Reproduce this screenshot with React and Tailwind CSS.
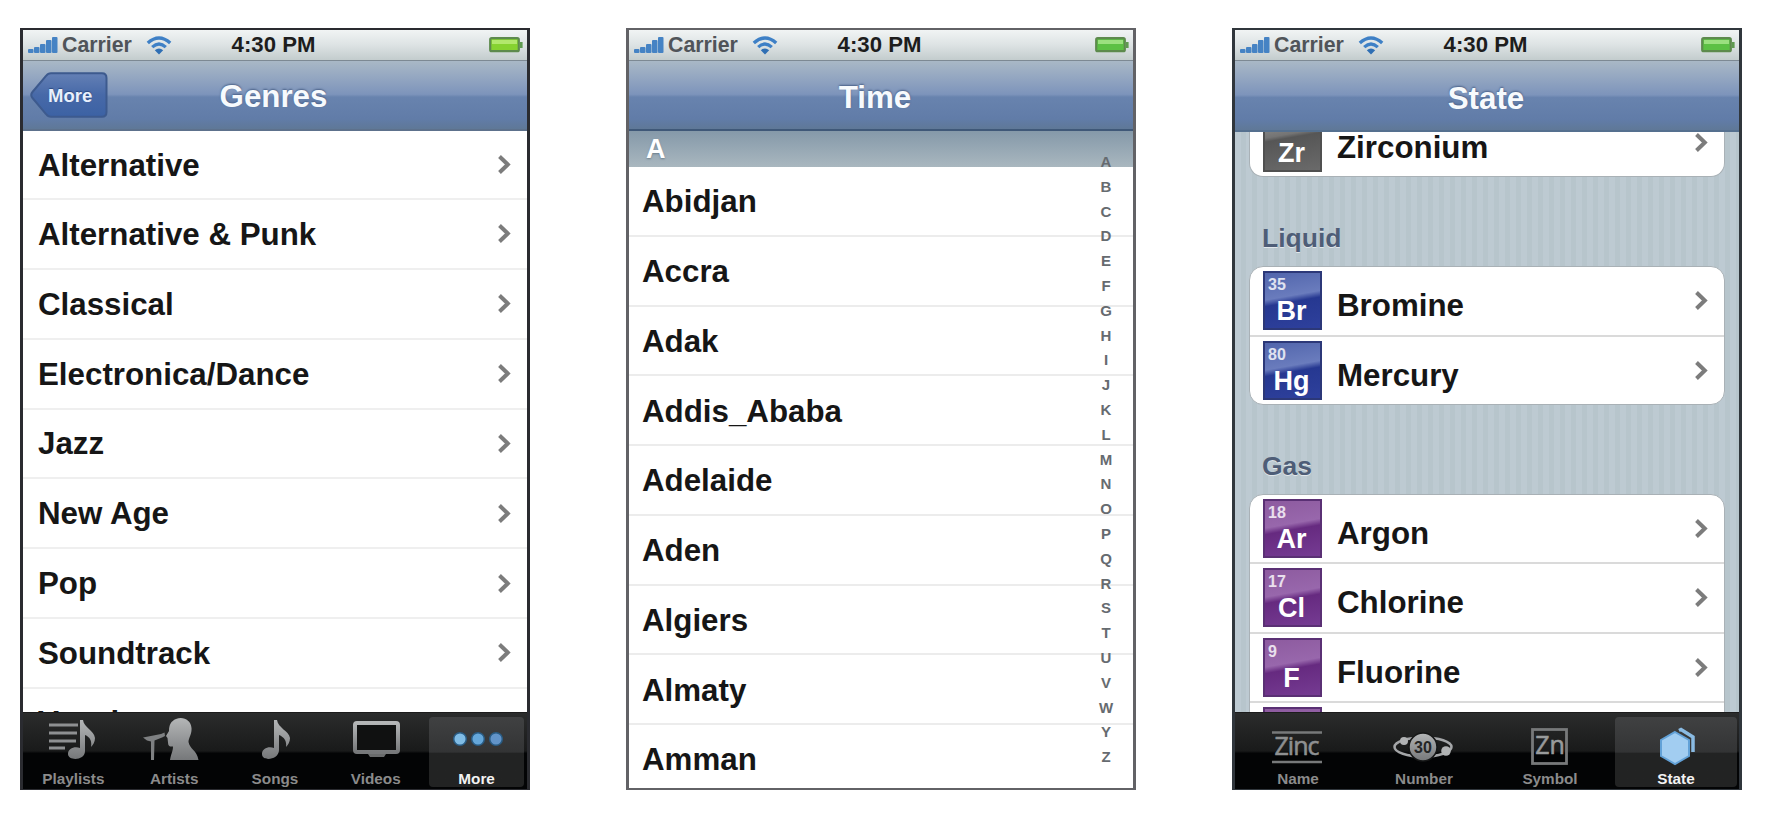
import React from "react";

const genres = ["Alternative", "Alternative & Punk", "Classical", "Electronica/Dance", "Jazz", "New Age", "Pop", "Soundtrack"];
const cities = ["Abidjan", "Accra", "Adak", "Addis_Ababa", "Adelaide", "Aden", "Algiers", "Almaty", "Amman"];
const letters = "ABCDEFGHIJKLMNOPQRSTUVWYZ".split("");

function Chevron() {
  return (
    <svg className="h-[21px] w-[15px] shrink-0" viewBox="0 0 15 21" fill="none">
      <path d="M1.500 2.500 L9.800 10.500 L1.500 18.500" stroke="#7c7c7c" strokeWidth="4" />
    </svg>
  );
}

function StatusBar({ lime }) {
  return (
    <div className="grid h-[31px] shrink-0 grid-cols-3 items-center border-b border-[#7d8993] bg-linear-to-b from-[#f1f4f4] via-[#dde3e4] to-[#c3cccd] pr-[4px] pl-[5px] text-[#1d1d1d]">
      <div className="flex items-center">
        <svg className="h-[18px] w-[31px]" viewBox="0 0 31 18">
          <g fill="#4583c4">
            <rect x="0" y="13" width="5.500" height="4" rx="1" />
            <rect x="6" y="11" width="5.500" height="6" rx="1" />
            <rect x="12" y="8" width="5.500" height="9" rx="1" />
            <rect x="18" y="4" width="5.500" height="13" rx="1" />
            <rect x="24" y="1" width="5.500" height="16" rx="1" />
          </g>
        </svg>
        <span className="ml-[3px] text-[21.3px] leading-[28px] text-[#505459]">Carrier</span>
        <svg className="ml-[14px] h-[19px] w-[26px] shrink-0" viewBox="0 0 26 19" fill="none">
          <path d="M1.8 7 Q13 -3 24.2 7" stroke="#3e80c6" strokeWidth="3.4" />
          <path d="M6.2 11.2 Q13 4.8 19.8 11.2" stroke="#3e80c6" strokeWidth="3.2" />
          <path d="M13 18.5 L8.8 14.2 Q13 10.6 17.2 14.2 Z" fill="#2f6fb4" />
        </svg>
      </div>
      <div className="pr-[4px] text-center text-[22.2px] leading-[28px]">4:30 PM</div>
      <svg className="h-[17px] w-[34px] justify-self-end" viewBox="0 0 34 17">
        <rect x="1.2" y="1.2" width="28.6" height="13" rx="1.5" fill={lime ? "#86d230" : "#5cc044"} stroke="#5d8a4d" strokeWidth="2.2" />
        <rect x="3" y="3" width="25" height="4" fill={lime ? "#b2e86c" : "#9be07f"} />
        <rect x="31" y="5" width="2.6" height="6" fill="#5f9a50" />
      </svg>
    </div>
  );
}

function NavBar({ title, back, tone }) {
  return (
    <div className={"relative flex shrink-0 items-center justify-center border-b-2 bg-[linear-gradient(180deg,#a9b8c6_0%,#93a6c1_25%,#7d94bb_49%,#6883ae_53%,#617ca8_85%,#5f7897_100%)] " + tone}>
      {back && (
        <div className="absolute top-[11px] left-[7px] h-[46px] w-[78px]">
          <svg className="absolute inset-0 h-[46px] w-[78px]" viewBox="0 0 78 46">
            <defs>
              <linearGradient id="back" x1="0" y1="0" x2="0" y2="1">
                <stop offset="0" stopColor="#6480b5" />
                <stop offset="0.5" stopColor="#4769a8" />
                <stop offset="1" stopColor="#3c62a4" />
              </linearGradient>
            </defs>
            <path d="M21 1.2 H72 Q76.500 1.200 76.500 6 V40 Q76.500 44.800 72 44.800 H21 Q18 44.800 16 42 L2.500 26 Q0 23 2.500 20 L16 4 Q18 1.200 21 1.200 Z" fill="url(#back)" stroke="#3d5a8e" strokeWidth="2" />
          </svg>
          <span className="relative block pt-[1px] pl-[18px] text-[18.500px] leading-[46px] text-[#e9f0fc] [text-shadow:0_-1px_1px_#2c4a80]">{back}</span>
        </div>
      )}
      <span className="text-[31.3px] leading-[40px] text-[#f7fafd] [text-shadow:0_-1px_2px_#4a6188]">{title}</span>
    </div>
  );
}

function Phone({ children, frame }) {
  return (
    <section className={"flex h-[762px] w-[510px] shrink-0 flex-col overflow-hidden border-x-[3px] border-t-2 bg-white " + frame}>
      {children}
    </section>
  );
}

function Tab({ label, active, children, wide }) {
  return (
    <div
      className={
        "mt-[4px] mb-[2px] flex flex-1 flex-col items-center rounded-[4px] " +
        (active ? "bg-linear-to-b from-[#404142] from-0% via-[#333435] via-50% to-[#222323] to-52% text-[#f2f2f2] " : "text-[#8b8b8b] ") +
        (wide ? "mx-[2px]" : "mx-[3px]")
      }
    >
      <svg className="h-[50px] w-[70px] shrink-0" viewBox="0 0 70 50">{children}</svg>
      <span className="text-[15.3px] leading-[23px]">{label}</span>
    </div>
  );
}

function TabBar({ children }) {
  return (
    <div className="relative z-10 flex h-[77px] shrink-0 border-t border-[#1c1c1c] bg-[linear-gradient(180deg,#2b2c2c_0%,#191a1a_50%,#030405_53%,#030405_100%)]">
      {children}
    </div>
  );
}

function Metal({ id }) {
  return (
    <linearGradient id={id} x1="0" y1="0" x2="0" y2="1">
      <stop offset="0" stopColor="#b4b6b7" />
      <stop offset="1" stopColor="#76787a" />
    </linearGradient>
  );
}

function Genres() {
  return (
    <Phone frame="border-b border-[#2a2b30]">
      <StatusBar lime />
      <NavBar title="Genres" back="More" tone="h-[70px] border-[#5d718c] pt-[4px] pr-[3px]" />
      <div className="flex-1 overflow-hidden text-[31.3px] text-[#161616]">
        {genres.map((g, i) => (
          <div key={g} className={"flex items-center justify-between border-b-2 border-[#efefef] pr-[14px] pl-[15px] " + (i === 0 ? "h-[69px]" : "h-[69.850px]")}>
            <span className="pt-[2px] leading-[40px]">{g}</span>
            <Chevron />
          </div>
        ))}
        <div className="pt-[14px] pl-[15px] leading-[40px]">Vocal</div>
      </div>
      <TabBar>
        <Tab label="Playlists">
          <defs><Metal id="m1" /></defs>
          <path d="M11 8 H40 M11 16 H39 M11 24 H38 M11 31 H27" stroke="#8e9092" strokeWidth="3.2" />
          <path d="M42 3 L45 3 C46 11 56 13 57 21 C57 25 55 28 53 30 C54 24 52 20 47 18 V34 C47 44 30 44 30 37 C30 31 37 29 42 31 Z" fill="url(#m1)" />
        </Tab>
        <Tab label="Artists">
          <defs><Metal id="m2" /></defs>
          <path d="M37 2 C44 -1 52 3 52.500 11 C53 17 49.500 21 49.500 25 C50.500 32 58 33 59.500 43 H31 C32 37 34 34 34 29.500 C31 30 29 29 29 25.500 L28.500 21 L27 19 L30 14 C30 8 32 4 37 2 Z" fill="url(#m2)" />
          <path d="M4 20.500 L22 17 L25.500 15.500 L26 19 L23 20.500 L15.500 23.500 L15 43 H12 L12 24.500 L8 23.500 Z" fill="#7e8082" />
        </Tab>
        <Tab label="Songs">
          <defs><Metal id="m3" /></defs>
          <path d="M34 3 L37 3 C38 11 49 14 50 21 C50 25 48 28 46 30 C47 24 44 20 39 18 V33 C39 43 22 45 22 37 C22 31 29 29 34 31 Z" fill="url(#m3)" />
        </Tab>
        <Tab label="Videos">
          <defs><Metal id="m4" /></defs>
          <rect x="14" y="6" width="43" height="29" rx="2" fill="#101111" stroke="url(#m4)" strokeWidth="4" />
          <path d="M27 37 H45 L43 40 H29 Z" fill="#6a6c6d" />
        </Tab>
        <Tab label="More" active>
          <g stroke="#295b83" strokeWidth="1.500">
            <circle cx="18" cy="22" r="6.3" fill="#80bce5" />
            <circle cx="36" cy="22" r="6.3" fill="#65a7da" />
            <circle cx="54" cy="22" r="6.3" fill="#6294c9" />
          </g>
        </Tab>
      </TabBar>
    </Phone>
  );
}

function Times() {
  return (
    <Phone frame="border-b-2 border-[#626266]">
      <StatusBar />
      <NavBar title="Time" tone="h-[70px] border-[#3f5878] pt-[6px] pr-[12px]" />
      <div className="relative flex-1 overflow-hidden">
        <div className="h-[36px] bg-linear-to-b from-[#8599a9] to-[#a9b7bf] pl-[17px] text-[27px] leading-[36px] text-white [text-shadow:0_1px_2px_#6d7f8c]">A</div>
        <div className="text-[31.3px] text-[#161616]">
          {cities.map((c) => (
            <div key={c} className="flex h-[69.750px] items-center border-b-2 border-[#ececec] pt-[3px] pl-[13px]">
              <span className="leading-[40px]">{c}</span>
            </div>
          ))}
        </div>
        <div className="absolute top-[19px] right-[17px] flex w-[20px] flex-col text-center text-[15px] text-[#666b70]">
          {letters.map((l) => (
            <span key={l} className="block h-[24.800px] leading-[24.800px]">{l}</span>
          ))}
        </div>
      </div>
    </Phone>
  );
}

const tileTone = {
  gray: "border-[#505050] bg-[linear-gradient(170deg,#9b9b9b_0%,#747474_36%,#565656_42%,#6a6a6a_100%)]",
  blue: "border-[#2c3878] bg-[linear-gradient(170deg,#5165ac_0%,#6a7cbd_42%,#263891_52%,#2e409c_100%)]",
  purple: "border-[#5a3074] bg-[linear-gradient(170deg,#8d5b9f_0%,#9867ac_42%,#662a80_52%,#753b92_100%)]",
};

function Element({ n, sym, name, tone, last, short }) {
  return (
    <div className={"flex shrink-0 items-start pt-[4px] pr-[14px] pl-[13px] " + (short ? "h-[67px] " : "h-[69.500px] ") + (last ? "" : "border-b-2 border-[#dadada]")}>
      <div className={"flex h-[59px] w-[59px] shrink-0 flex-col border-2 text-white " + tileTone[tone]}>
        <span className="h-[21px] pl-[3px] text-[16px] leading-[23px] text-white/80">{n}</span>
        <span className="pr-[2px] text-center text-[27px] leading-[34px]">{sym}</span>
      </div>
      <span className="flex-1 pt-[15px] pl-[15px] text-[31.3px] leading-[40px] text-[#161616]">{name}</span>
      <div className="pt-[19px]"><Chevron /></div>
    </div>
  );
}

function Elements() {
  return (
    <Phone frame="border-b border-[#30363c]">
      <StatusBar />
      <NavBar title="State" tone="h-[71px] border-[#55708f] pt-[6px] pr-[2px]" />
      <div className="flex flex-1 flex-col overflow-hidden bg-[repeating-linear-gradient(90deg,#bdcad2_0px,#bdcad2_6px,#b7c5cc_6px,#b7c5cc_11px)] pr-[14px] pl-[14px]">
        <div className="flex h-[45px] shrink-0 flex-col justify-end overflow-hidden rounded-b-[14px] border-x border-b border-[#a9b1b6] bg-white">
          <Element n="40" sym="Zr" name="Zirconium" tone="gray" last short />
        </div>
        <h2 className="h-[89px] shrink-0 pt-[41px] pl-[13px] text-[26.500px] leading-[40px] text-[#4e5d77] [text-shadow:0_1px_0_#e1e7eb]">Liquid</h2>
        <div className="shrink-0 overflow-hidden rounded-[14px] border border-[#a9b1b6] bg-white">
          <Element n="35" sym="Br" name="Bromine" tone="blue" />
          <Element n="80" sym="Hg" name="Mercury" tone="blue" last short />
        </div>
        <h2 className="h-[89px] shrink-0 pt-[41px] pl-[13px] text-[26.500px] leading-[40px] text-[#4e5d77] [text-shadow:0_1px_0_#e1e7eb]">Gas</h2>
        <div className="shrink-0 overflow-hidden rounded-t-[14px] border border-[#a9b1b6] bg-white">
          <Element n="18" sym="Ar" name="Argon" tone="purple" />
          <Element n="17" sym="Cl" name="Chlorine" tone="purple" />
          <Element n="9" sym="F" name="Fluorine" tone="purple" />
          <Element n="" sym="" name="" tone="purple" />
        </div>
      </div>
      <TabBar>
        <Tab label="Name" wide>
          <path d="M9 15.500 H59 M9 45 H59" stroke="#77797a" strokeWidth="2.500" />
          <text x="34" y="38" textAnchor="middle" fontSize="25" fontWeight="400" fill="#8e9091" stroke="#8e9091" strokeWidth="0.600" fontFamily="Open Sans, sans-serif" textLength="45">Zinc</text>
        </Tab>
        <Tab label="Number" wide>
          <defs><Metal id="m5" /></defs>
          <ellipse cx="34" cy="30" rx="28.500" ry="9.500" fill="none" stroke="#a4a6a8" strokeWidth="2.500" />
          <circle cx="34" cy="30" r="14" fill="url(#m5)" stroke="#161717" strokeWidth="1.500" />
          <text x="34" y="36" textAnchor="middle" fontSize="16" fill="#242526">30</text>
          <circle cx="15" cy="24" r="4" fill="#b1b3b4" />
          <circle cx="57" cy="34" r="4.800" fill="#b1b3b4" />
        </Tab>
        <Tab label="Symbol" wide>
          <rect x="17.500" y="12.500" width="34" height="34" fill="none" stroke="#77797a" strokeWidth="2.800" />
          <text x="35" y="37" textAnchor="middle" fontSize="25" fontWeight="400" fill="#999b9c" stroke="#999b9c" strokeWidth="0.600" fontFamily="Open Sans, sans-serif">Zn</text>
        </Tab>
        <Tab label="State" active wide>
          <path d="M38 13.500 L40 12.500 L52 20 V35" fill="none" stroke="#8abbe3" strokeWidth="3.500" />
          <path d="M34 15 L48 23 V39 L34 47 L20 39 V23 Z" fill="#a2cdf1" stroke="#62a1d7" strokeWidth="2" />
        </Tab>
      </TabBar>
    </Phone>
  );
}

export default function App() {
  return (
    <main className="flex h-[824px] w-[1774px] gap-[96px] overflow-hidden bg-white pt-[28px] pl-[20px] [font-family:'Liberation_Sans',Arial,sans-serif] font-bold">
      <Genres />
      <Times />
      <Elements />
    </main>
  );
}
